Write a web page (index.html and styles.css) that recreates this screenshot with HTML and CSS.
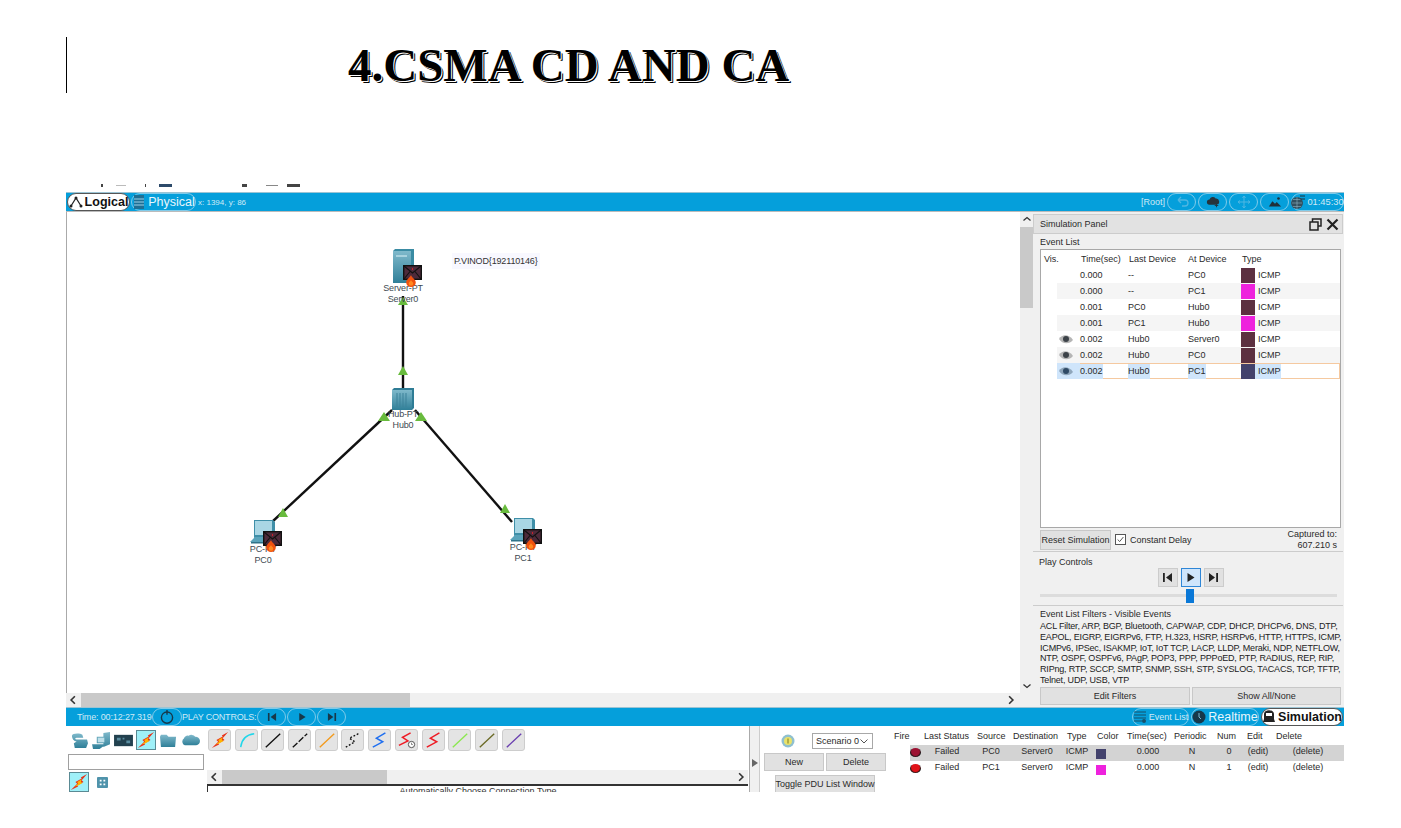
FILE: index.html
```html
<!DOCTYPE html>
<html lang="en">
<head>
<meta charset="utf-8">
<title>CSMA CD and CA</title>
<link rel="stylesheet" href="styles.css">
</head>
<body>
<svg class="defs" width="0" height="0" aria-hidden="true">
  <defs>
    <linearGradient id="teal" x1="0" y1="0" x2="0" y2="1"><stop offset="0" stop-color="#7fb9cb"/><stop offset="1" stop-color="#2f7f98"/></linearGradient>
    <symbol id="env" viewBox="0 0 19 15">
      <rect x=".7" y=".7" width="17.6" height="13.6" fill="#4d2a3a" stroke="#111" stroke-width="1.4"/>
      <path d="M1 1l8.500 7L18 1M1 14l6-7.500M18 14l-6-7.500" fill="none" stroke="#111" stroke-width="1.100"/>
      <path d="M9.500 3v2" stroke="#c8202a"/>
    </symbol>
    <symbol id="flame" viewBox="0 0 10 12">
      <path d="M5 0c.6 2.500 4.800 4.500 4.800 7.400A4.800 4.600 0 0 1 .2 7.400C.2 4.500 4 2.500 5 0z" fill="#f0520f"/>
      <path d="M5 5c.4 1.300 2.300 2.100 2.300 3.500a2.300 2.300 0 0 1-4.600 0C2.700 7.100 4.500 6.300 5 5z" fill="#ff8a1f"/>
    </symbol>
    <symbol id="pc" viewBox="0 0 26 26">
      <path d="M4 1h19l2 2v15H4z" fill="#3f8fa8"/>
      <rect x="5" y="2" width="17" height="14" fill="#a9d6e4"/>
      <path d="M4 18h20l1 2-3 3H0l4-4z" fill="#5aa3ba"/>
      <path d="M1 23h21v1.500H1z" fill="#2f7389"/>
    </symbol>
    <symbol id="bolt" viewBox="0 0 20 20">
      <path d="M1 19l7-7-2-2 7-4-1-1 7-4-6 7 2 2-7 4 1 1z" fill="#e8321a"/>
      <path d="M5 15l4-3-1-2 5-3-1 3 2 1-5 3z" fill="#ffb400"/>
    </symbol>
  </defs>
</svg>

<header class="doc-head">
  <span class="caret"></span>
  <h1 class="doc-title">4.CSMA CD AND CA</h1>
</header>

<main class="app">
  <div class="clip-strip">
    <span class="crumb crumb-a"></span><span class="crumb crumb-b"></span><span class="crumb crumb-c"></span><span class="crumb crumb-d"></span><span class="crumb crumb-e"></span><span class="crumb crumb-f"></span><span class="crumb crumb-g"></span>
  </div>

  <div class="bar bar-top">
    <span class="pill pill-on pill-tab">
      <svg class="ic14" viewBox="0 0 14 14"><path d="M2 11l5-8 5 8" fill="none" stroke="#222" stroke-width="1.200"/><circle cx="2" cy="11" r="1.500" fill="#222"/><circle cx="7" cy="3" r="1.500" fill="#222"/><circle cx="12" cy="11" r="1.500" fill="#222"/></svg>Logical
    </span>
    <span class="pill pill-tab pill-phys">
      <svg class="ic14" viewBox="0 0 14 14"><rect x="2" y="0" width="10" height="14" fill="#1f6f94"/><path d="M2 4h10M2 7h10M2 10h10" stroke="#9cd3ea"/></svg>Physical
    </span>
    <span class="coords">x: 1394, y: 86</span>
    <span class="spacer"></span>
    <span class="root">[Root]</span>
    <span class="pill pill-ic"><svg class="ic14" viewBox="0 0 14 14"><path d="M3 5h7a3 3 0 0 1 0 6H7M3 5l3-3M3 5l3 3" fill="none" stroke="#4fb6e2" stroke-width="1.300"/></svg></span>
    <span class="pill pill-ic"><svg class="ic14" viewBox="0 0 16 14"><path d="M4 10a3 3 0 0 1 0-6 4 4 0 0 1 7-1 3.500 3.500 0 0 1 1 7z" fill="#26343c"/><path d="M10 11h4M12 9v4" stroke="#26343c"/></svg></span>
    <span class="pill pill-ic"><svg class="ic14" viewBox="0 0 14 14"><path d="M7 1v12M1 7h12M7 1L5.500 3M7 1l1.500 2M7 13l-1.500-2M7 13l1.500-2M1 7l2-1.500M1 7l2 1.500M13 7l-2-1.500M13 7l-2 1.500" fill="none" stroke="#4fb6e2"/></svg></span>
    <span class="pill pill-ic"><svg class="ic14" viewBox="0 0 16 14"><path d="M1 12l4-6 3 3 2-2 5 5z" fill="#20303a"/><circle cx="12" cy="3" r="1.500" fill="#20303a"/></svg></span>
    <span class="pill pill-clock"><svg class="ic14" viewBox="0 0 14 14"><circle cx="6" cy="8" r="6" fill="#33505f"/><path d="M1 8h10M6 2v12M2 4.500h8M2 11.500h8" stroke="#8fb4c4" stroke-width=".6"/><path d="M9 1h5M9 4h5" stroke="#20303a"/></svg>01:45:30</span>
  </div>

  <div class="middle">
    <section class="canvas-col">
      <div class="canvas-row">
        <div class="canvas">
          <svg class="links" viewBox="67 212 953 481">
            <g class="link"><path d="M403 296V390"/><path d="M392 410L272 522"/><path d="M415 410L512 522"/></g>
            <g class="arrow">
              <path d="M403 297l5 8h-10z"/><path d="M403 366l5 9h-10z"/><path d="M384 412l6 9h-12z"/><path d="M421 412l6 9h-12z"/><path d="M283 508l5 9h-10z"/><path d="M505 504l5 9h-10z"/>
            </g>
          </svg>

          <div class="node node-server">
            <svg class="dev" viewBox="0 0 21 34"><path d="M0 2l2-2h19v32l-2 2H0z" fill="#3a8ba3"/><rect x="0" y="2" width="18" height="32" fill="url(#teal)"/><path d="M3 6h11v2H3z" fill="#a8d2de"/></svg>
            <span class="node-label">Server-PT<br>Server0</span>
          </div>
          <svg class="msg msg-server"><use href="#env"/></svg>
          <svg class="fl fl-server"><use href="#flame"/></svg>

          <div class="node node-hub">
            <svg class="dev" viewBox="0 0 22 22"><path d="M0 2l2-2h20v20l-2 2H0z" fill="#2e7c95"/><rect x="0" y="2" width="20" height="20" fill="url(#teal)"/><path d="M5 5v14M8 5v14M11 5v14M14 5v14" stroke="#3d8199"/></svg>
            <span class="node-label">Hub-PT<br>Hub0</span>
          </div>

          <div class="node node-pc0">
            <svg class="dev"><use href="#pc"/></svg>
            <span class="node-label">PC-PT<br>PC0</span>
          </div>
          <svg class="msg msg-pc0"><use href="#env"/></svg>
          <svg class="fl fl-pc0"><use href="#flame"/></svg>

          <div class="node node-pc1">
            <svg class="dev"><use href="#pc"/></svg>
            <span class="node-label">PC-PT<br>PC1</span>
          </div>
          <svg class="msg msg-pc1"><use href="#env"/></svg>
          <svg class="fl fl-pc1"><use href="#flame"/></svg>

          <span class="note">P.VINOD{192110146}</span>
        </div>
        <div class="vscroll">
          <svg class="vchev" viewBox="0 0 10 8"><path d="M1.500 5.500L5 2.500l3.500 3" fill="none" stroke="#333" stroke-width="1.300"/></svg>
          <span class="vthumb"></span>
          <span class="spacer"></span>
          <svg class="vchev" viewBox="0 0 10 8"><path d="M1.500 2.500L5 5.500l3.500-3" fill="none" stroke="#333" stroke-width="1.300"/></svg>
        </div>
      </div>
      <div class="hscroll">
        <svg class="chev" viewBox="0 0 8 8"><path d="M5.500 1L2.500 4l3 3" fill="none" stroke="#333" stroke-width="1.300"/></svg>
        <span class="hthumb"></span>
        <span class="spacer"></span>
        <svg class="chev" viewBox="0 0 8 8"><path d="M2.500 1l3 3-3 3" fill="none" stroke="#333" stroke-width="1.300"/></svg>
      </div>
    </section>

    <aside class="sim">
      <div class="sim-title">
        <span>Simulation Panel</span>
        <span class="spacer"></span>
        <svg class="win" viewBox="0 0 13 13"><path d="M3.500 3.500V1h8.500v7H9M1 4h8v8H1z" fill="none" stroke="#222" stroke-width="1.500"/></svg>
        <svg class="win" viewBox="0 0 13 13"><path d="M1.500 1.500l10 10M11.500 1.500l-10 10" stroke="#222" stroke-width="2.200"/></svg>
      </div>
      <div class="evt-label">Event List</div>
      <div class="evt-box">
        <div class="evt-row evt-head"><span>Vis.</span><span>Time(sec)</span><span>Last Device</span><span>At Device</span><span>Type</span></div>
        <div class="evt-row"><span></span><span>0.000</span><span>--</span><span>PC0</span><span class="t"><i class="sw sw-m"></i>ICMP</span></div>
        <div class="evt-row alt"><span></span><span>0.000</span><span>--</span><span>PC1</span><span class="t"><i class="sw sw-p"></i>ICMP</span></div>
        <div class="evt-row"><span></span><span>0.001</span><span>PC0</span><span>Hub0</span><span class="t"><i class="sw sw-m"></i>ICMP</span></div>
        <div class="evt-row alt"><span></span><span>0.001</span><span>PC1</span><span>Hub0</span><span class="t"><i class="sw sw-p"></i>ICMP</span></div>
        <div class="evt-row"><span class="e"><svg class="eye" viewBox="0 0 14 10"><path d="M0 5c3-5 10-5 14 1-4 5-11 4-14-1z" fill="#b5b5b5"/><circle cx="7" cy="5" r="3" fill="#3c4248"/></svg></span><span>0.002</span><span>Hub0</span><span>Server0</span><span class="t"><i class="sw sw-m"></i>ICMP</span></div>
        <div class="evt-row alt"><span class="e"><svg class="eye" viewBox="0 0 14 10"><path d="M0 5c3-5 10-5 14 1-4 5-11 4-14-1z" fill="#b5b5b5"/><circle cx="7" cy="5" r="3" fill="#3c4248"/></svg></span><span>0.002</span><span>Hub0</span><span>PC0</span><span class="t"><i class="sw sw-m"></i>ICMP</span></div>
        <div class="evt-row sel"><span class="e hl"><svg class="eye" viewBox="0 0 14 10"><path d="M0 5c3-5 10-5 14 1-4 5-11 4-14-1z" fill="#8fa6bb"/><circle cx="7" cy="5" r="3" fill="#2f4a66"/></svg></span><span><b class="hl">0.002</b></span><span><b class="hl">Hub0</b></span><span><b class="hl">PC1</b></span><span class="t"><b class="hl hl-t"><i class="sw sw-n"></i>ICMP</b></span></div>
      </div>
      <div class="evt-foot">
        <span class="btn btn-reset">Reset Simulation</span>
        <span class="check"><svg viewBox="0 0 11 11"><path d="M2 5.500l2.500 2.500L9 2.500" fill="none" stroke="#333"/></svg></span>
        <span>Constant Delay</span>
        <span class="spacer"></span>
        <span class="captured">Captured to:<br>607.210 s</span>
      </div>
      <div class="play">
        <div class="sec-label">Play Controls</div>
        <div class="play-btns">
          <span class="pbtn"><svg viewBox="0 0 11 11"><path d="M1 1h1.800v9H1zM10 1v9L4 5.500z" fill="#222"/></svg></span>
          <span class="pbtn pbtn-on"><svg viewBox="0 0 11 11"><path d="M2.500 1v9l7-4.500z" fill="#222"/></svg></span>
          <span class="pbtn"><svg viewBox="0 0 11 11"><path d="M10 1H8.200v9H10zM1 1v9l6-4.500z" fill="#222"/></svg></span>
        </div>
        <div class="slider"><span class="thumb"></span></div>
      </div>
      <div class="filters">
        <div class="filters-title">Event List Filters - Visible Events</div>
        <p class="filters-text">ACL Filter, ARP, BGP, Bluetooth, CAPWAP, CDP, DHCP, DHCPv6, DNS, DTP,<br>EAPOL, EIGRP, EIGRPv6, FTP, H.323, HSRP, HSRPv6, HTTP, HTTPS, ICMP,<br>ICMPv6, IPSec, ISAKMP, IoT, IoT TCP, LACP, LLDP, Meraki, NDP, NETFLOW,<br>NTP, OSPF, OSPFv6, PAgP, POP3, PPP, PPPoED, PTP, RADIUS, REP, RIP,<br>RIPng, RTP, SCCP, SMTP, SNMP, SSH, STP, SYSLOG, TACACS, TCP, TFTP,<br>Telnet, UDP, USB, VTP</p>
        <div class="filters-btns"><span class="btn">Edit Filters</span><span class="btn">Show All/None</span></div>
      </div>
    </aside>
  </div>

  <div class="bar bar-bottom">
    <span class="time">Time: 00:12:27.319</span>
    <span class="pill pill-ctl pill-reload"><svg class="ic14" viewBox="0 0 12 12"><circle cx="6" cy="6.500" r="4.800" fill="none" stroke="#17384a" stroke-width="1.200"/><path d="M6 0v4" stroke="#17384a" stroke-width="1.200"/></svg></span>
    <span class="ctl-label">PLAY CONTROLS:</span>
    <span class="pill pill-ctl"><svg class="ic10" viewBox="0 0 11 11"><path d="M1 1h1.800v9H1zM10 1v9L4 5.500z" fill="#17384a"/></svg></span>
    <span class="pill pill-ctl"><svg class="ic10" viewBox="0 0 11 11"><path d="M2.500 1v9l7-4.500z" fill="#17384a"/></svg></span>
    <span class="pill pill-ctl"><svg class="ic10" viewBox="0 0 11 11"><path d="M10 1H8.200v9H10zM1 1v9l6-4.500z" fill="#17384a"/></svg></span>
    <span class="spacer"></span>
    <span class="pill pill-evt"><svg class="ic14" viewBox="0 0 14 14"><path d="M1 2h12M1 5h12M1 8h12M1 11h8" stroke="#17506b" stroke-width="1.200"/><circle cx="11" cy="11" r="2" fill="#17506b"/></svg>Event List</span>
    <span class="pill pill-rt"><svg class="ic14" viewBox="0 0 14 14"><circle cx="7" cy="7" r="6.500" fill="#17384a"/><path d="M7 3v4l2 2" fill="none" stroke="#7fb7d0"/></svg>Realtime</span>
    <span class="pill pill-on pill-simu"><svg class="ic14" viewBox="0 0 14 14"><path d="M2 9V4a4 3 0 0 1 10 0v5l1 3H1z" fill="#222"/><rect x="4" y="3" width="6" height="3" fill="#fff"/></svg>Simulation</span>
  </div>

  <div class="bottom">
    <section class="dev-col">
      <div class="dev-icons">
        <svg class="dev-ic" viewBox="0 0 20 18"><path d="M2 4c0-3 9-3 11-1l1 3H7c-2 0-2 2 0 2h11l1 4-2 5H5l-1-5 3-2C4 10 2 7 2 4z" fill="url(#teal)"/></svg>
        <svg class="dev-ic" viewBox="0 0 20 18"><path d="M12 1l7-1v13l-7 3zM5 5h9v7H5zM0 13h12v2l-4 3H1z" fill="url(#teal)"/><path d="M6 6h7v5H6z" fill="#bfe0ea"/></svg>
        <svg class="dev-ic" viewBox="0 0 20 18"><rect y="3" width="20" height="12" fill="#22414f"/><path d="M3 6h4v3H3zM9 6h2v2H9zM13 9h4v3h-4z" fill="#5a8da0"/></svg>
        <span class="dev-on"><svg viewBox="0 0 20 20"><use href="#bolt"/></svg></span>
        <svg class="dev-ic" viewBox="0 0 20 18"><path d="M1 5l1-2h6l2 2h8l-1 11H2z" fill="url(#teal)"/></svg>
        <svg class="dev-ic" viewBox="0 0 20 18"><path d="M4 14a4 4 0 0 1-1-7 4 4 0 0 1 5-3 5 5 0 0 1 7 1 4.500 4.500 0 0 1 1 9z" fill="url(#teal)"/></svg>
      </div>
      <div class="dev-input"></div>
      <div class="dev-sub">
        <span class="dev-on dev-on-b"><svg viewBox="0 0 20 20"><use href="#bolt"/></svg></span>
        <svg class="grid-ic" viewBox="0 0 12 12"><rect width="12" height="12" rx="1" fill="#4f93ab"/><path d="M3 3h2v2H3zM7 3h2v2H7zM3 7h2v2H3zM7 7h2v2H7z" fill="#fff"/></svg>
      </div>
    </section>
    <section class="conn-col">
      <div class="conn-list">
        <span class="cb"><svg viewBox="0 0 20 20"><use href="#bolt"/></svg></span>
        <span class="cb"><svg viewBox="0 0 20 20"><path d="M3 18C4 9 9 4 18 3" fill="none" stroke="#1fd6ea" stroke-width="1.600"/></svg></span>
        <span class="cb"><svg viewBox="0 0 20 20"><path d="M2 18L18 3" stroke="#111" stroke-width="1.500"/></svg></span>
        <span class="cb"><svg viewBox="0 0 20 20"><path d="M2 18L18 3" stroke="#111" stroke-width="1.500" stroke-dasharray="7 2"/></svg></span>
        <span class="cb"><svg viewBox="0 0 20 20"><path d="M2 18L18 3" stroke="#f39a1c" stroke-width="1.500"/></svg></span>
        <span class="cb"><svg viewBox="0 0 20 20"><path d="M2 18l10-6-6-4 10-5" fill="none" stroke="#111" stroke-width="1.500" stroke-dasharray="2 2"/></svg></span>
        <span class="cb"><svg viewBox="0 0 20 20"><path d="M2 18l11-6-7-4 10-6" fill="none" stroke="#1f6ff0" stroke-width="1.700"/></svg></span>
        <span class="cb"><svg viewBox="0 0 20 20"><path d="M1 16l10-5-6-4 9-5" fill="none" stroke="#ee1c25" stroke-width="1.700"/><circle cx="15" cy="15" r="3.500" fill="#fff" stroke="#444"/><path d="M15 13v2h1.500" fill="none" stroke="#444" stroke-width=".7"/></svg></span>
        <span class="cb"><svg viewBox="0 0 20 20"><path d="M2 18l11-6-7-4 10-6" fill="none" stroke="#ee1c25" stroke-width="1.700"/></svg></span>
        <span class="cb"><svg viewBox="0 0 20 20"><path d="M2 18L18 3" stroke="#8be84f" stroke-width="1.500"/></svg></span>
        <span class="cb"><svg viewBox="0 0 20 20"><path d="M2 18L18 3" stroke="#6b6a26" stroke-width="1.500"/></svg></span>
        <span class="cb"><svg viewBox="0 0 20 20"><path d="M2 18L18 3" stroke="#6a3fb0" stroke-width="1.500"/></svg></span>
      </div>
      <div class="hscroll hscroll-conn">
        <svg class="chev" viewBox="0 0 8 8"><path d="M5.500 1L2.500 4l3 3" fill="none" stroke="#333" stroke-width="1.300"/></svg>
        <span class="hthumb hthumb-conn"></span>
        <span class="spacer"></span>
        <svg class="chev" viewBox="0 0 8 8"><path d="M2.500 1l3 3-3 3" fill="none" stroke="#333" stroke-width="1.300"/></svg>
      </div>
      <div class="conn-desc">Automatically Choose Connection Type</div>
    </section>
    <div class="split"><svg viewBox="0 0 6 8"><path d="M0 0l6 4-6 4z" fill="#666"/></svg></div>
    <section class="scen">
      <div class="scen-top">
        <svg class="info" viewBox="0 0 14 14"><circle cx="7" cy="7" r="6.500" fill="#8fc0cf"/><circle cx="7" cy="7" r="4" fill="#e9e26a"/><path d="M7 4.500v5" stroke="#7a7a20"/></svg>
        <span class="select">Scenario 0<svg viewBox="0 0 8 5"><path d="M.5.500L4 4 7.500.500" fill="none" stroke="#555"/></svg></span>
      </div>
      <div class="scen-btns"><span class="btn">New</span><span class="btn">Delete</span></div>
      <span class="btn btn-toggle">Toggle PDU List Window</span>
    </section>
    <section class="pdu">
      <div class="pdu-row pdu-head"><span>Fire</span><span>Last Status</span><span>Source</span><span>Destination</span><span>Type</span><span>Color</span><span>Time(sec)</span><span>Periodic</span><span>Num</span><span>Edit</span><span>Delete</span></div>
      <div class="pdu-row pdu-data pdu-alt"><span class="fire"><i class="dot dot-a"></i></span><span>Failed</span><span>PC0</span><span>Server0</span><span>ICMP</span><span><i class="pc pc-n"></i></span><span>0.000</span><span>N</span><span>0</span><span>(edit)</span><span>(delete)</span></div>
      <div class="pdu-row pdu-data"><span class="fire"><i class="dot"></i></span><span>Failed</span><span>PC1</span><span>Server0</span><span>ICMP</span><span><i class="pc pc-p"></i></span><span>0.000</span><span>N</span><span>1</span><span>(edit)</span><span>(delete)</span></div>
    </section>
  </div>
</main>
</body>
</html>
```

FILE: styles.css
```css
* { box-sizing: border-box; }
html, body { margin: 0; background: #fff; }
body { width: 1401px; height: 828px; overflow: hidden; font-family: "Liberation Sans", Arial, sans-serif; font-size: 9px; color: #2a2a2a; }
.defs { position: absolute; }
.spacer { flex: 1; }

/* document heading */
.doc-head { display: flex; height: 183px; padding: 37px 0 0 66px; }
.caret { width: 1px; height: 56px; background: #000; }
.doc-title { margin: 0 0 0 281px; height: 56px; font-family: "Liberation Serif", serif; font-weight: 700; font-size: 47px; line-height: 56px; color: #000; text-shadow: 1px 1px 0 #fff, 2px 2px 0 #000; white-space: nowrap; }

/* app shell */
.app { width: 1278px; height: 609px; margin-left: 66px; display: flex; flex-direction: column; background: #f0f0f0; overflow: hidden; }
.clip-strip { height: 9px; flex: none; background: #fff; position: relative; overflow: hidden; }
.crumb { position: absolute; top: 1px; height: 3px; background: #444; }
.crumb-a { left: 35px; width: 2px; }
.crumb-b { left: 50px; width: 10px; height: 1px; top: 2px; background: #bbb; }
.crumb-c { left: 79px; width: 1px; }
.crumb-d { left: 93px; width: 13px; background: #2d4a6a; }
.crumb-e { left: 176px; width: 5px; }
.crumb-f { left: 200px; width: 12px; height: 1px; top: 2px; background: #888; }
.crumb-g { left: 221px; width: 13px; }

.bar { height: 20px; flex: none; display: flex; align-items: center; background: #059fdb; color: #cfeaf6; border-top: 1px solid #9cc4d4; border-bottom: 1px solid #bbb; white-space: nowrap; }
.pill { display: inline-flex; align-items: center; justify-content: center; height: 18px; flex: none; border: 1px solid #7fcbea; border-radius: 9px; }
.pill-on { background: #fff; color: #111; border-color: #555; font-weight: 700; }
.pill-tab { width: 63px; margin-left: 1px; gap: 2px; font-size: 12.500px; }
.pill-phys { width: 65px; margin-left: 1px; color: #e8f6fc; }
.ic14 { width: 14px; height: 14px; flex: none; }
.ic10 { width: 10px; height: 10px; flex: none; }
.coords { margin-left: 2px; font-size: 8px; }
.root { margin-right: 2px; }
.pill-ic { width: 29px; margin-right: 2px; }
.pill-clock { width: 53px; gap: 2px; font-size: 9.300px; }

/* middle */
.middle { height: 495px; flex: none; display: flex; background: #f0f0f0; }
.canvas-col { width: 967px; display: flex; flex-direction: column; }
.canvas-row { height: 481px; flex: none; display: flex; }
.canvas { position: relative; width: 954px; height: 481px; background: #fff; border-left: 1px solid #aaa; overflow: hidden; }
.links { position: absolute; left: 0; top: 0; width: 953px; height: 481px; }
.link path { fill: none; stroke: #111; stroke-width: 2.400; }
.arrow path { fill: #68bb3d; }
.node { position: absolute; display: flex; flex-direction: column; align-items: center; width: 70px; line-height: 11px; letter-spacing: -.15px; color: #3e4a52; }
.node-label { text-align: center; }
.dev { display: block; }
.node-server { left: 301px; top: 37px; }
.node-server .dev { width: 21px; height: 34px; }
.node-hub { left: 301px; top: 176px; }
.node-hub .dev { width: 22px; height: 22px; margin-bottom: -1px; }
.node-pc0 { left: 161px; top: 307px; }
.node-pc0 .dev { width: 26px; height: 26px; margin-bottom: -1px; }
.node-pc1 { left: 421px; top: 305px; }
.node-pc1 .dev { width: 26px; height: 26px; margin-bottom: -1px; }
.msg { position: absolute; width: 19px; height: 15px; }
.fl { position: absolute; width: 10px; height: 12px; }
.msg-server { left: 336px; top: 53px; }
.fl-server { left: 339px; top: 63px; }
.msg-pc0 { left: 196px; top: 319px; }
.fl-pc0 { left: 199px; top: 328px; }
.msg-pc1 { left: 456px; top: 317px; }
.fl-pc1 { left: 459px; top: 326px; }
.note { position: absolute; left: 385px; top: 41px; padding: 0 2px; background: #f8f8ff; line-height: 16px; letter-spacing: -.15px; color: #333; }

.vscroll { width: 13px; display: flex; flex-direction: column; align-items: center; background: #f0f0f0; }
.vchev { width: 10px; height: 8px; margin: 3px 0; flex: none; }
.vthumb { width: 100%; height: 81px; margin-top: 1px; background: #c9c9c9; flex: none; }
.hscroll { height: 14px; flex: none; display: flex; align-items: center; background: #f0f0f0; margin-right: 15px; }
.chev { width: 14px; height: 10px; flex: none; }
.hthumb { width: 329px; height: 100%; margin-left: 1px; background: #c9c9c9; }

/* simulation panel */
.sim { width: 311px; flex: none; display: flex; flex-direction: column; padding: 2px 1px 0 0; }
.sim-title { display: flex; align-items: center; gap: 4px; height: 20px; padding: 0 3px 0 6px; background: #e2e2e2; border: 1px solid #ccc; flex: none; }
.win { width: 13px; height: 13px; }
.evt-label { height: 13px; line-height: 13px; margin-top: 2px; padding-left: 7px; flex: none; }
.evt-box { height: 279px; flex: none; margin: 0 2px 0 7px; padding-top: 1px; background: #fff; border: 1px solid #a8a8a8; }
.evt-row { display: grid; grid-template-columns: 23px 48px 60px 53px 1fr; height: 16px; align-items: center; margin-left: 16px; line-height: 16px; }
.evt-head { margin-left: 0; grid-template-columns: 37px 48px 59px 54px 1fr; padding-left: 3px; }
.evt-row.alt { background: #f5f5f5; }
.evt-row.sel { box-shadow: inset 0 0 0 1px #f5c9a0; }
.evt-row .t { display: flex; align-items: center; }
.evt-row .e { display: flex; align-items: center; padding-left: 2px; height: 16px; }
.hl { background: #cfe5fb; font-weight: 400; display: inline-block; height: 15px; line-height: 15px; }
.hl-t { display: inline-flex; align-items: center; }
.sw { display: block; width: 14px; height: 15px; margin-right: 3px; }
.sw-m { background: #5c3040; }
.sw-p { background: #ee22dd; }
.sw-n { background: #43426c; }
.eye { width: 14px; height: 10px; }

.evt-foot { display: flex; align-items: center; height: 24px; flex: none; padding: 0 6px 0 7px; gap: 4px; border-bottom: 1px solid #ccc; }
.btn { display: flex; align-items: center; justify-content: center; background: #e1e1e1; border: 1px solid #c8c8c8; white-space: nowrap; }
.btn-reset { width: 71px; height: 20px; flex: none; }
.check { display: block; width: 11px; height: 11px; border: 1px solid #555; background: #fff; }
.check svg { display: block; width: 9px; height: 9px; }
.captured { text-align: right; line-height: 11px; }

.play { height: 54px; flex: none; padding: 5px 5px 0 6px; border-bottom: 1px solid #ccc; }
.sec-label { line-height: 11px; }
.play-btns { display: flex; justify-content: center; gap: 3px; padding-left: 4px; }
.pbtn { display: flex; align-items: center; justify-content: center; width: 20px; height: 19px; background: #e1e1e1; border: 1px solid #ccc; }
.pbtn svg { width: 11px; height: 11px; }
.pbtn-on { background: #cfe5fb; border-color: #2f86d6; }
.slider { position: relative; height: 3px; margin: 7px 1px 0 1px; background: #dcdcdc; }
.thumb { position: absolute; left: 146px; top: -5px; width: 8px; height: 14px; background: #0a78d7; }

.filters { flex: 1; min-height: 0; padding: 2px 0 0 7px; }
.filters-title { line-height: 13px; }
.filters-text { margin: 0; line-height: 10.800px; letter-spacing: -.18px; color: #222; white-space: nowrap; }
.filters-btns { display: grid; grid-template-columns: 150px 149px; gap: 2px; margin-top: 1px; }
.filters-btns .btn { height: 18px; }

/* bottom */
.bar-bottom { height: 19px; border-bottom: 0; }
.time { width: 75px; margin-left: 11px; flex: none; letter-spacing: -.15px; }
.pill-ctl { width: 29px; margin-right: 1px; }
.pill-reload { width: 30px; margin-right: 0; }
.ctl-label { width: 75px; flex: none; letter-spacing: -.2px; }
.pill-evt { width: 57px; gap: 2px; margin-right: 2px; }
.pill-rt { width: 68px; gap: 2px; font-size: 12.500px; color: #e8f6fc; margin-right: 2px; }
.pill-simu { width: 82px; gap: 2px; margin-right: 1px; font-size: 12.500px; }

.bottom { flex: 1; min-height: 0; display: flex; background: #fff; overflow: hidden; }
.dev-col { width: 140px; flex: none; padding: 3px 2px 0; }
.dev-icons { display: flex; align-items: center; gap: 3px; height: 22px; padding: 0 2px; }
.dev-ic { width: 19px; height: 17px; flex: none; }
.dev-on { display: block; width: 20px; height: 20px; flex: none; background: #9ff0f8; border: 1px solid #5a8a94; }
.dev-on svg { display: block; width: 18px; height: 18px; }
.dev-input { height: 16px; margin-top: 3px; background: #fff; border: 1px solid #a0a0a0; }
.dev-sub { display: flex; align-items: center; gap: 8px; margin-top: 2px; }
.dev-on-b { margin-left: 1px; }
.grid-ic { width: 11px; height: 11px; }
.conn-col { width: 541px; flex: none; display: flex; flex-direction: column; background: #fff; margin-left: 1px; }
.conn-list { display: flex; gap: 3.700px; height: 44px; flex: none; padding: 3px 0 0 1px; }
.cb { display: block; width: 23px; height: 22px; flex: none; padding: 1px 2px; background: #e4e4e4; border: 1px solid #cdcdcd; border-radius: 3px; }
.cb svg { display: block; width: 18px; height: 18px; }
.hscroll-conn { margin-right: 0; }
.hthumb-conn { width: 165px; }
.conn-desc { flex: none; height: 20px; border-top: 2px solid #333; border-left: 1px solid #333; text-align: center; color: #333; line-height: 11px; }
.split { width: 11px; flex: none; margin-left: 1px; display: flex; align-items: center; border-left: 1px solid #aaa; border-right: 1px solid #ccc; padding-left: 2px; background: #f0f0f0; }
.split svg { width: 6px; height: 8px; margin-top: 7px; }
.scen { width: 130px; flex: none; padding: 7px 3px 0 4px; }
.scen-top { display: flex; align-items: center; gap: 17px; height: 16px; padding-left: 17px; }
.info { width: 14px; height: 14px; flex: none; }
.select { display: flex; align-items: center; justify-content: space-between; width: 61px; height: 16px; padding: 0 4px 0 3px; background: #fff; border: 1px solid #a8a8a8; white-space: nowrap; }
.select svg { width: 8px; height: 5px; }
.scen-btns { display: grid; grid-template-columns: 60px 60px; gap: 2px; height: 18px; margin-top: 4px; }
.btn-toggle { width: 100px; height: 18px; margin: 4px 0 0 11px; }
.pdu { flex: 1; min-width: 0; background: #fff; padding: 1px 0 0 3px; }
.pdu-row { display: grid; height: 16px; white-space: nowrap; }
.pdu-head { height: 18px; padding-left: 1px; align-items: center; grid-template-columns: 30px 53px 36px 54px 30px 30px 47px 43px 30px 29px 1fr; }
.pdu-data { margin-left: 17px; text-align: center; line-height: 12px; grid-template-columns: 18px 38px 50px 42px 38px 30px 44px 44px 30px 28px 1fr; }
.pdu-alt { background: #d3d3d3; }
.fire { display: flex; align-items: center; }
.dot { display: block; width: 11px; height: 9px; margin-top: -2px; border-radius: 50%; background: radial-gradient(circle at 50% 40%, #e01218 50%, #111 70%); }
.dot-a { background: radial-gradient(circle at 50% 40%, #9c1232 50%, #111 70%); }
.pc { display: block; width: 10px; height: 10px; margin-top: 4px; }
.pc-n { background: #43426c; }
.pc-p { background: #ee22dd; }
```
